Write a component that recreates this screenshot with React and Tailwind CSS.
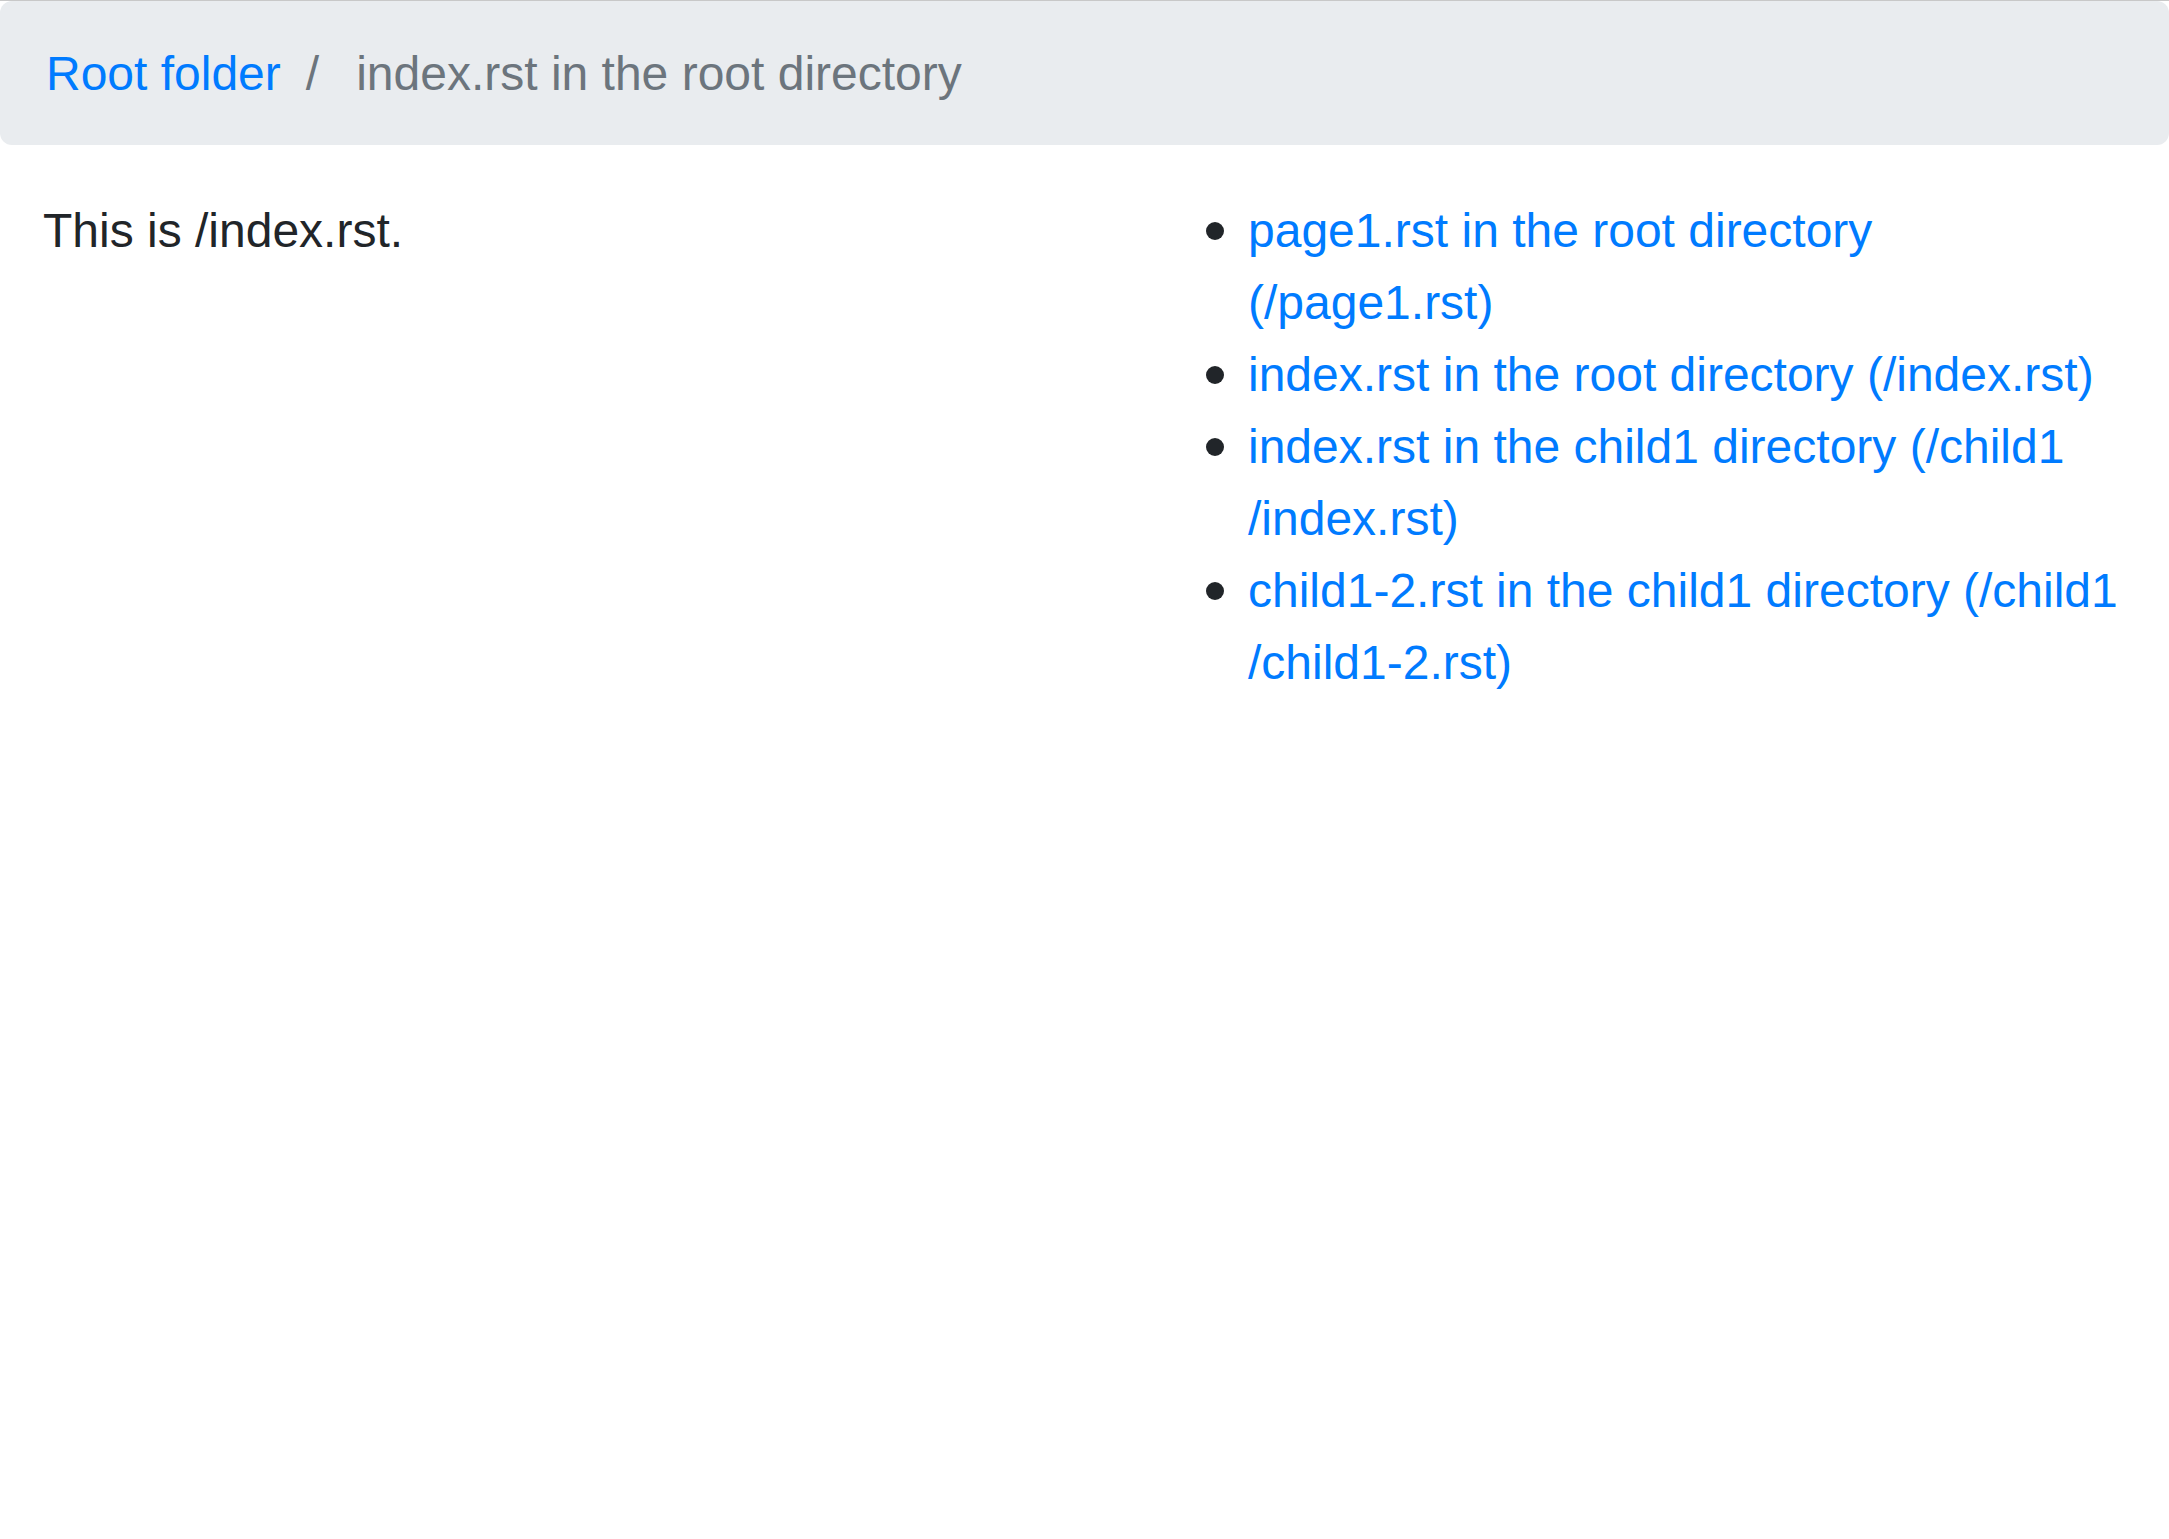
export default function App() {
  const font = { fontFamily: '"Liberation Sans", Arial, sans-serif' };
  const items = [
    "page1.rst in the root directory (/page1.rst)",
    "index.rst in the root directory (/index.rst)",
    "index.rst in the child1 directory (/child1 /index.rst)",
    "child1-2.rst in the child1 directory (/child1 /child1-2.rst)",
  ];
  return (
    <div className="min-h-[1539px] w-[2169px] bg-white border-t border-[#c8c8c8] text-[48px] leading-[72px] text-[#212529]" style={font}>
      <nav className="flex items-center h-[144px] pt-[2px] rounded-[12px] bg-[#e9ecef] px-[46px]">
        <a className="text-[#007bff]">Root folder</a>
        <span className="pl-[25px] pr-[37px] text-[#6c757d]">/</span>
        <span className="text-[#6c757d]">index.rst in the root directory</span>
      </nav>
      <div className="flex mt-[50px]">
        <div className="w-[1152px] pl-[43px]">
          <p>This is /index.rst.</p>
        </div>
        <div className="w-[972px]">
          <ul className="list-none pl-[96px]">
            {items.map((t) => (
              <li key={t} className="relative">
                <span className="absolute left-[-42px] top-[27px] w-[18px] h-[18px] rounded-full bg-[#212529]" />
                <a className="text-[#007bff]">{t}</a>
              </li>
            ))}
          </ul>
        </div>
      </div>
    </div>
  );
}
